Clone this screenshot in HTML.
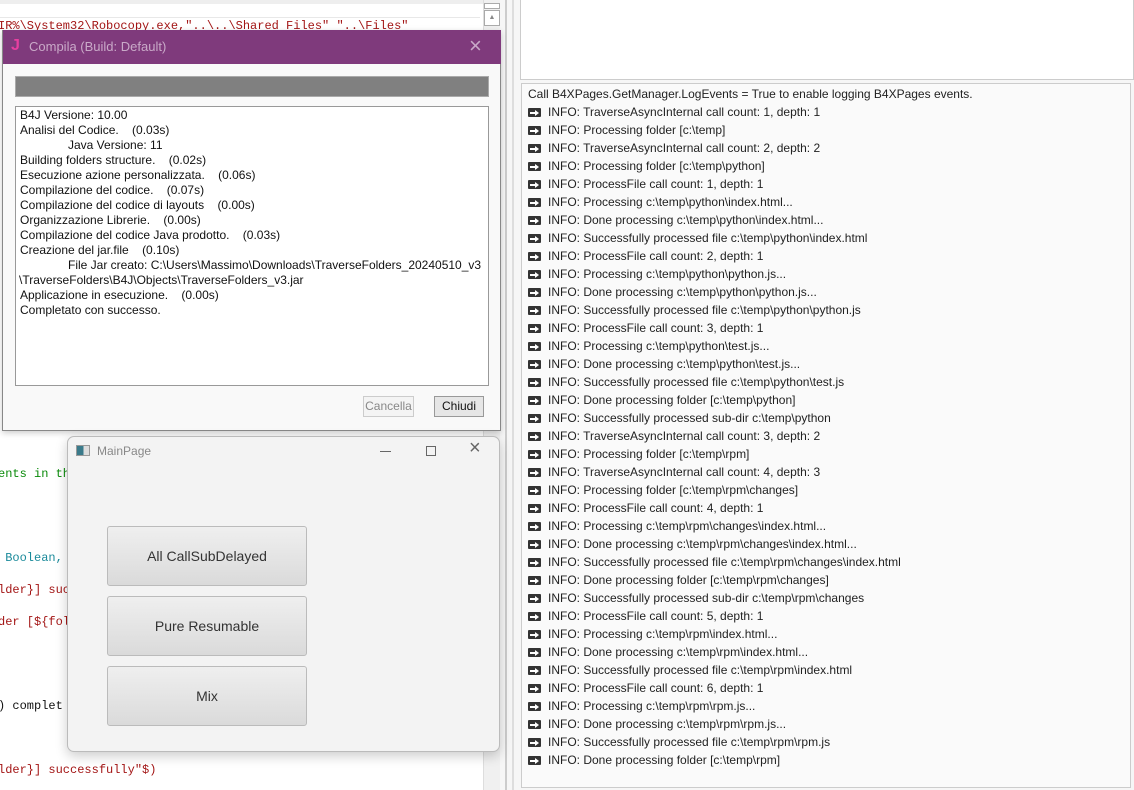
<!DOCTYPE html>
<html><head><meta charset="utf-8"><style>
*{margin:0;padding:0;box-sizing:border-box}
body{width:1134px;height:790px;overflow:hidden;background:#f6f6f6;position:relative;font-family:"Liberation Sans",sans-serif}
.abs{position:absolute}
.code{font-family:"Liberation Mono",monospace;font-size:12px;white-space:pre;position:absolute;left:-2px}
.log{position:absolute;left:521px;top:83px;width:610px;height:705px;background:#fafafa;border:1px solid #ccc;font-size:12px;color:#222}
.ln{position:absolute;left:6px;white-space:nowrap;line-height:18px;margin-top:-1px}
.ic{display:inline-block;width:13px;height:9px;background:#333;border-radius:1px;vertical-align:-1px;margin-right:7px;position:relative}
.ic:after{content:"";position:absolute;left:2px;top:3.5px;width:6px;height:2px;background:#fff}
.ic:before{content:"";position:absolute;left:7px;top:1.5px;border-left:4px solid #fff;border-top:3px solid transparent;border-bottom:3px solid transparent}
.btn{position:absolute;left:107px;width:200px;height:60px;border:1px solid #bbb;border-radius:3px;background:linear-gradient(#efefef,#dadada);font-size:14px;color:#333;text-align:center;line-height:58px}
.cl{position:absolute;left:4px;font-size:12px;color:#111;white-space:nowrap;line-height:15px;margin-top:-1px}
</style></head><body>
<div class="abs" style="left:0;top:0;width:483px;height:790px;background:#fff"></div>
<div class="abs" style="left:0;top:0;width:483px;height:4px;background:#eee"></div>
<div class="abs" style="left:0;top:5px;width:480px;height:13px;background:#fff;border-bottom:1px solid #e8e8e8"></div>
<div class="code" style="top:19px;color:#a31515">IR%\System32\Robocopy.exe,"..\..\Shared Files" "..\Files"</div>
<div class="code" style="top:467px;color:#0a8a0a">ents in th</div>
<div class="code" style="top:551px;color:#1a8a9a"> Boolean,</div>
<div class="code" style="top:583px;color:#a31515">lder}] suc</div>
<div class="code" style="top:615px;color:#a31515">der [${fol</div>
<div class="code" style="top:699px;color:#111">) complet</div>
<div class="code" style="top:763px;color:#a31515">lder}] successfully"$)</div>
<div class="abs" style="left:483px;top:0;width:17px;height:790px;background:#f0f0f0;border-left:1px solid #ddd"></div>
<div class="abs" style="left:484px;top:3px;width:16px;height:6px;border:1px solid #aaa;background:#fff"></div>
<div class="abs" style="left:484px;top:10px;width:16px;height:16px;border:1px solid #aaa;background:#fff;font-size:7px;color:#888;text-align:center;line-height:14px">▲</div>
<div class="abs" style="left:505px;top:0;width:2px;height:790px;background:#ccc"></div>
<div class="abs" style="left:512px;top:0;width:2px;height:790px;background:#ddd"></div>
<div class="abs" style="left:520px;top:0;width:614px;height:80px;background:#fff;border:1px solid #ccc;border-top:none"></div>
<div class="log">
<div class="ln" style="top:2px">Call B4XPages.GetManager.LogEvents = True to enable logging B4XPages events.</div>
<div class="ln" style="top:20px"><span class="ic"></span>INFO: TraverseAsyncInternal call count: 1, depth: 1</div>
<div class="ln" style="top:38px"><span class="ic"></span>INFO: Processing folder [c:\temp]</div>
<div class="ln" style="top:56px"><span class="ic"></span>INFO: TraverseAsyncInternal call count: 2, depth: 2</div>
<div class="ln" style="top:74px"><span class="ic"></span>INFO: Processing folder [c:\temp\python]</div>
<div class="ln" style="top:92px"><span class="ic"></span>INFO: ProcessFile call count: 1, depth: 1</div>
<div class="ln" style="top:110px"><span class="ic"></span>INFO: Processing c:\temp\python\index.html...</div>
<div class="ln" style="top:128px"><span class="ic"></span>INFO: Done processing c:\temp\python\index.html...</div>
<div class="ln" style="top:146px"><span class="ic"></span>INFO: Successfully processed file c:\temp\python\index.html</div>
<div class="ln" style="top:164px"><span class="ic"></span>INFO: ProcessFile call count: 2, depth: 1</div>
<div class="ln" style="top:182px"><span class="ic"></span>INFO: Processing c:\temp\python\python.js...</div>
<div class="ln" style="top:200px"><span class="ic"></span>INFO: Done processing c:\temp\python\python.js...</div>
<div class="ln" style="top:218px"><span class="ic"></span>INFO: Successfully processed file c:\temp\python\python.js</div>
<div class="ln" style="top:236px"><span class="ic"></span>INFO: ProcessFile call count: 3, depth: 1</div>
<div class="ln" style="top:254px"><span class="ic"></span>INFO: Processing c:\temp\python\test.js...</div>
<div class="ln" style="top:272px"><span class="ic"></span>INFO: Done processing c:\temp\python\test.js...</div>
<div class="ln" style="top:290px"><span class="ic"></span>INFO: Successfully processed file c:\temp\python\test.js</div>
<div class="ln" style="top:308px"><span class="ic"></span>INFO: Done processing folder [c:\temp\python]</div>
<div class="ln" style="top:326px"><span class="ic"></span>INFO: Successfully processed sub-dir c:\temp\python</div>
<div class="ln" style="top:344px"><span class="ic"></span>INFO: TraverseAsyncInternal call count: 3, depth: 2</div>
<div class="ln" style="top:362px"><span class="ic"></span>INFO: Processing folder [c:\temp\rpm]</div>
<div class="ln" style="top:380px"><span class="ic"></span>INFO: TraverseAsyncInternal call count: 4, depth: 3</div>
<div class="ln" style="top:398px"><span class="ic"></span>INFO: Processing folder [c:\temp\rpm\changes]</div>
<div class="ln" style="top:416px"><span class="ic"></span>INFO: ProcessFile call count: 4, depth: 1</div>
<div class="ln" style="top:434px"><span class="ic"></span>INFO: Processing c:\temp\rpm\changes\index.html...</div>
<div class="ln" style="top:452px"><span class="ic"></span>INFO: Done processing c:\temp\rpm\changes\index.html...</div>
<div class="ln" style="top:470px"><span class="ic"></span>INFO: Successfully processed file c:\temp\rpm\changes\index.html</div>
<div class="ln" style="top:488px"><span class="ic"></span>INFO: Done processing folder [c:\temp\rpm\changes]</div>
<div class="ln" style="top:506px"><span class="ic"></span>INFO: Successfully processed sub-dir c:\temp\rpm\changes</div>
<div class="ln" style="top:524px"><span class="ic"></span>INFO: ProcessFile call count: 5, depth: 1</div>
<div class="ln" style="top:542px"><span class="ic"></span>INFO: Processing c:\temp\rpm\index.html...</div>
<div class="ln" style="top:560px"><span class="ic"></span>INFO: Done processing c:\temp\rpm\index.html...</div>
<div class="ln" style="top:578px"><span class="ic"></span>INFO: Successfully processed file c:\temp\rpm\index.html</div>
<div class="ln" style="top:596px"><span class="ic"></span>INFO: ProcessFile call count: 6, depth: 1</div>
<div class="ln" style="top:614px"><span class="ic"></span>INFO: Processing c:\temp\rpm\rpm.js...</div>
<div class="ln" style="top:632px"><span class="ic"></span>INFO: Done processing c:\temp\rpm\rpm.js...</div>
<div class="ln" style="top:650px"><span class="ic"></span>INFO: Successfully processed file c:\temp\rpm\rpm.js</div>
<div class="ln" style="top:668px"><span class="ic"></span>INFO: Done processing folder [c:\temp\rpm]</div>
</div>
<div class="abs" style="left:2px;top:30px;width:499px;height:401px;background:#f9f9f9;border:1px solid #888;border-top:none;box-shadow:0 2px 6px rgba(0,0,0,.2)">
 <div class="abs" style="left:0;top:0;width:498px;height:34px;background:#7f3a7c"></div>
 <div class="abs" style="left:8px;top:7px;color:#e83fa0;font-size:16px;font-weight:bold">J</div>
 <div class="abs" style="left:26px;top:9px;color:#c9a9c8;font-size:13px">Compila (Build: Default)</div>
 <div class="abs" style="left:466px;top:3px;color:#c9a9c8;font-size:22px;font-weight:100">×</div>
 <div class="abs" style="left:12px;top:46px;width:474px;height:21px;background:#808080;border:1px solid #aaa"></div>
 <div class="abs" style="left:12px;top:76px;width:474px;height:280px;background:#fff;border:1px solid #999">
  <div class="cl" style="top:2px">B4J Versione: 10.00</div>
  <div class="cl" style="top:17px">Analisi del Codice.&nbsp;&nbsp;&nbsp; (0.03s)</div>
  <div class="cl" style="top:32px;left:52px">Java Versione: 11</div>
  <div class="cl" style="top:47px">Building folders structure.&nbsp;&nbsp;&nbsp; (0.02s)</div>
  <div class="cl" style="top:62px">Esecuzione azione personalizzata.&nbsp;&nbsp;&nbsp; (0.06s)</div>
  <div class="cl" style="top:77px">Compilazione del codice.&nbsp;&nbsp;&nbsp; (0.07s)</div>
  <div class="cl" style="top:92px">Compilazione del codice di layouts&nbsp;&nbsp;&nbsp; (0.00s)</div>
  <div class="cl" style="top:107px">Organizzazione Librerie.&nbsp;&nbsp;&nbsp; (0.00s)</div>
  <div class="cl" style="top:122px">Compilazione del codice Java prodotto.&nbsp;&nbsp;&nbsp; (0.03s)</div>
  <div class="cl" style="top:137px">Creazione del jar.file&nbsp;&nbsp;&nbsp; (0.10s)</div>
  <div class="cl" style="top:152px;left:52px">File Jar creato: C:\Users\Massimo\Downloads\TraverseFolders_20240510_v3</div>
  <div class="cl" style="top:167px;left:3px">\TraverseFolders\B4J\Objects\TraverseFolders_v3.jar</div>
  <div class="cl" style="top:182px">Applicazione in esecuzione.&nbsp;&nbsp;&nbsp; (0.00s)</div>
  <div class="cl" style="top:197px">Completato con successo.</div>
 </div>
 <div class="abs" style="left:360px;top:366px;width:51px;height:21px;border:1px solid #ccc;background:#f4f4f4;color:#888;font-size:12px;text-align:center;line-height:19px">Cancella</div>
 <div class="abs" style="left:431px;top:366px;width:50px;height:21px;border:1px solid #999;background:#e6e6e6;color:#111;font-size:12px;text-align:center;line-height:19px">Chiudi</div>
</div>
<div class="abs" style="left:67px;top:436px;width:433px;height:316px;background:#f3f3f3;border:1px solid #bbb;border-radius:7px;box-shadow:0 4px 12px rgba(0,0,0,.2)">
 <div class="abs" style="left:8px;top:8px;width:14px;height:11px;border:1px solid #999;background:linear-gradient(90deg,#3a7a8a 55%,#ddd 55%)"></div>
 <div class="abs" style="left:29px;top:7px;color:#888;font-size:12px">MainPage</div>
 <div class="abs" style="left:312px;top:14px;width:11px;height:1px;background:#666"></div>
 <div class="abs" style="left:358px;top:9px;width:10px;height:10px;border:1px solid #666"></div>
 <div class="abs" style="left:401px;top:0;color:#666;font-size:20px;font-weight:100">×</div>
</div>
<div class="btn" style="top:526px">All CallSubDelayed</div>
<div class="btn" style="top:596px">Pure Resumable</div>
<div class="btn" style="top:666px">Mix</div>
</body></html>
